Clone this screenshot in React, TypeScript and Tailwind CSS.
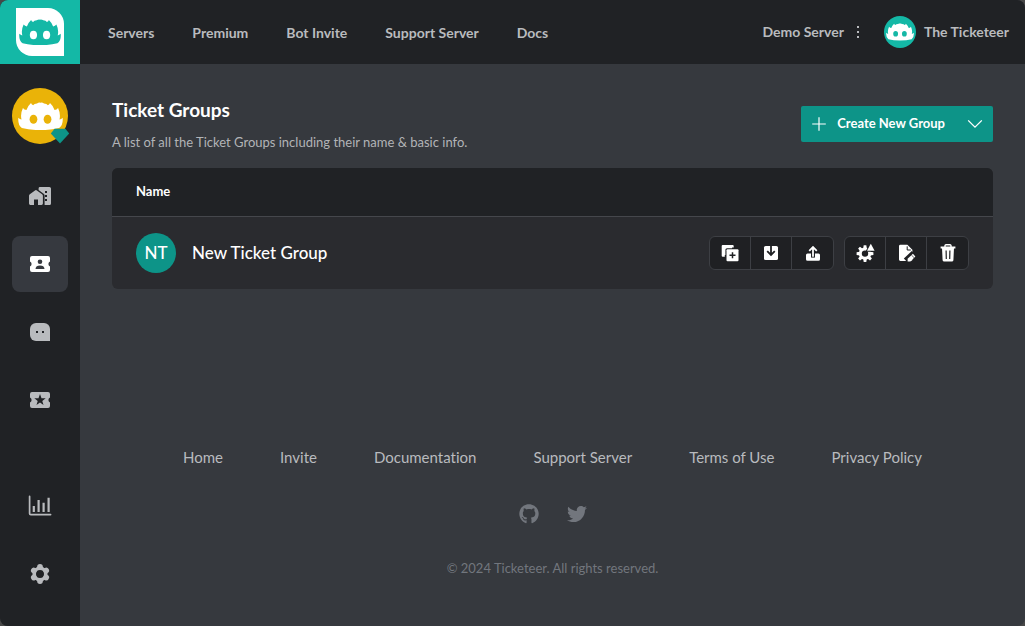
import type { ReactNode } from "react";
import { FaGithub, FaTwitter } from "react-icons/fa";

function Mascot({ className, eyes }: { className: string; eyes: string }) {
  return (
    <svg viewBox="32 46 128 82" className={className} aria-hidden="true">
      <path
        fill="currentColor"
        d="M33 91Q37 95 42 96Q38 80 46 63Q50 68 56 69Q60 57 69 49Q70 53 75 55Q78 50 86 50Q91 47 96 48Q101 47 106 50Q114 50 117 55Q122 53 123 49Q132 57 136 69Q142 68 146 63Q154 80 150 96Q155 95 159 91Q161 112 149 120Q126 126 96 126Q66 126 43 120Q31 112 33 91Z"
      />
      <ellipse cx="76" cy="95" rx="11" ry="13" fill={eyes} />
      <ellipse cx="116" cy="95" rx="11" ry="13" fill={eyes} />
    </svg>
  );
}

const ticketShape =
  "M4 4H20A2 2 0 0 1 22 6V9.6A2.6 2.6 0 0 0 22 14.4V18A2 2 0 0 1 20 20H4A2 2 0 0 1 2 18V14.4A2.6 2.6 0 0 0 2 9.6V6A2 2 0 0 1 4 4Z";

function HomeWork() {
  return (
    <svg viewBox="0 0 24 24" className="size-6" aria-hidden="true">
      <path d="M12 3H21.4A1.6 1.6 0 0 1 23 4.6V19.4A1.6 1.6 0 0 1 21.4 21H16.6V11.6A2.4 2.4 0 0 0 15.6 9.7L10.6 6.1V4.4A1.4 1.4 0 0 1 12 3Z" fill="currentColor" />
      <path d="M17 7h2v2h-2zM17 11h2v2h-2zM17 15h2v2h-2z" fill="#202225" />
      <path d="M1 11.8A2 2 0 0 1 1.8 10.2L7 6.4A1.6 1.6 0 0 1 8.9 6.4L14.1 10.2A2 2 0 0 1 14.9 11.8V19.6A1.4 1.4 0 0 1 13.5 21H10V15.5H6V21H2.4A1.4 1.4 0 0 1 1 19.6Z" fill="currentColor" />
    </svg>
  );
}

function TicketPerson() {
  return (
    <svg viewBox="0 0 24 24" className="size-6" aria-hidden="true">
      <path d={ticketShape} fill="currentColor" />
      <circle cx="12" cy="9.8" r="2.3" fill="#36393f" />
      <path d="M7.5 17Q7.8 13.6 12 13.6T16.5 17Z" fill="#36393f" />
    </svg>
  );
}

function TicketStar() {
  return (
    <svg viewBox="0 0 24 24" className="size-6" aria-hidden="true">
      <path d={ticketShape} fill="currentColor" />
      <path
        d="M12 6L13.5 10.2L17.7 10.3L14.3 12.9L15.5 17L12 14.6L8.5 17L9.7 12.9L6.3 10.3L10.5 10.2Z"
        fill="#202225"
      />
    </svg>
  );
}

function ChatBox() {
  return (
    <svg viewBox="0 0 24 24" className="size-6" aria-hidden="true">
      <path d="M8 3H16A6 6 0 0 1 22 9V21H8A6 6 0 0 1 2 15V9A6 6 0 0 1 8 3Z" fill="currentColor" />
      <path d="M8 11h2v2H8zM14 11h2v2h-2z" fill="#202225" />
    </svg>
  );
}

function BarChart() {
  return (
    <svg viewBox="0 0 24 24" className="size-6" fill="none" stroke="currentColor" aria-hidden="true">
      <path d="M1.6 2.4V19.4A1.2 1.2 0 0 0 2.8 20.6H22.6" strokeWidth="1.7" strokeLinecap="round" />
      <path d="M5.8 12V18M10.6 6V18M15.6 8.7V18M20.6 3.7V18" strokeWidth="2.2" />
    </svg>
  );
}

function Cog() {
  return (
    <svg viewBox="0 0 24 24" className="size-6" aria-hidden="true">
      <circle cx="12" cy="12" r="5.8" fill="none" stroke="currentColor" strokeWidth="3.6" />
      {[0, 60, 120, 180, 240, 300].map((a) => (
        <circle key={a} cx="12" cy="4.9" r="2.9" fill="currentColor" transform={`rotate(${a} 12 12)`} />
      ))}
    </svg>
  );
}

function Icon20({ children }: { children: ReactNode }) {
  return (
    <svg viewBox="0 0 20 20" className="size-5" fill="none" aria-hidden="true">
      {children}
    </svg>
  );
}

const dark = "#1f2023";

const transferActions = [
  {
    label: "Duplicate group",
    icon: (
      <Icon20>
        <path d="M2.7 2H12.7A1 1 0 0 1 13.7 3V4.4H4.8V13.7H2.7A1 1 0 0 1 1.7 12.7V3A1 1 0 0 1 2.7 2Z" fill="#fff" />
        <path d="M3.5 3.5H12V12H3.5Z" fill="#fff" />
        <rect x="5.4" y="5.2" width="13.8" height="13.8" rx="1.6" fill={dark} />
        <rect x="6.5" y="6.2" width="12" height="12" rx="1" fill="#fff" />
        <path d="M12.5 9.2V15.2M9.5 12.2H15.5" stroke={dark} strokeWidth="1.5" />
      </Icon20>
    ),
  },
  {
    label: "Import group",
    icon: (
      <Icon20>
        <rect x="3" y="3" width="14" height="14" rx="1.6" fill="#fff" />
        <path d="M10 3V11M6.2 8.2L10 12L13.8 8.2" stroke={dark} strokeWidth="1.8" />
      </Icon20>
    ),
  },
  {
    label: "Export group",
    icon: (
      <Icon20>
        <path d="M4.5 10.6H15.5A1.5 1.5 0 0 1 17 12.1V16.3A1.5 1.5 0 0 1 15.5 17.8H4.5A1.5 1.5 0 0 1 3 16.3V12.1A1.5 1.5 0 0 1 4.5 10.6Z" fill="#fff" />
        <path d="M10 9V14.6" stroke={dark} strokeWidth="4" />
        <path d="M10 4.4V13.8M6.2 7.8L10 4L13.8 7.8" stroke="#fff" strokeWidth="1.8" />
      </Icon20>
    ),
  },
];

const manageActions = [
  {
    label: "Group settings",
    icon: (
      <Icon20>
        <circle cx="10" cy="10.6" r="4.7" stroke="#fff" strokeWidth="3" />
        {[0, 45, 90, 135, 180, 225, 270, 315].map((a) => (
          <path key={a} d="M8.7 2.2H11.3L11.8 5.4H8.2Z" fill="#fff" transform={`rotate(${a} 10 10.6)`} />
        ))}
        <path d="M15.6 -1L21 8.8H10.4Z" fill={dark} />
        <path d="M15.8 0.8L19.6 7.8H12Z" fill="#fff" />
      </Icon20>
    ),
  },
  {
    label: "Edit group",
    icon: (
      <Icon20>
        <path d="M4.4 1.8H11.4L16.4 6.8V16.6A1.4 1.4 0 0 1 15 18H4.4A1.4 1.4 0 0 1 3 16.6V3.2A1.4 1.4 0 0 1 4.4 1.8Z" fill="#fff" />
        <path d="M11.2 3.4V7H14.8" stroke={dark} strokeWidth="1" />
        <path d="M10 17.8L18 10.4" stroke={dark} strokeWidth="6.4" />
        <path d="M11.6 18.6V15.8L16.9 10.8L19.4 13.4L14.4 18.6Z" fill="#fff" />
        <path d="M15.4 12L18 14.6" stroke={dark} strokeWidth=".7" />
      </Icon20>
    ),
  },
  {
    label: "Delete group",
    icon: (
      <Icon20>
        <path d="M7 4V2.6A1 1 0 0 1 8 1.7H12A1 1 0 0 1 13 2.6V4" stroke="#fff" strokeWidth="1.4" />
        <path d="M2.6 3.6H17.4V5.4H2.6Z" fill="#fff" />
        <path d="M4 5H16L15.4 17.2A1.6 1.6 0 0 1 13.8 18.6H6.2A1.6 1.6 0 0 1 4.6 17.2Z" fill="#fff" />
        <path d="M8.1 7.6L8.3 16M11.9 7.6L11.7 16" stroke={dark} strokeWidth="1.2" />
      </Icon20>
    ),
  },
];

function ActionGroup({ actions }: { actions: { label: string; icon: ReactNode }[] }) {
  return (
    <div className="flex divide-x divide-[#3d3f44] overflow-hidden rounded-md border border-[#3d3f44] bg-[#1f2023]">
      {actions.map((a) => (
        <button key={a.label} type="button" aria-label={a.label} className="flex h-8 w-[41px] items-center justify-center">
          {a.icon}
        </button>
      ))}
    </div>
  );
}

function SideLink({ label, active = false, children }: { label: string; active?: boolean; children: ReactNode }) {
  return (
    <a
      href="#"
      aria-label={label}
      className={
        active
          ? "flex size-14 items-center justify-center rounded-lg bg-[#36393f] text-white"
          : "flex size-14 items-center justify-center rounded-lg text-[#b9bbbe]"
      }
    >
      {children}
    </a>
  );
}

const navLinks = ["Servers", "Premium", "Bot Invite", "Support Server", "Docs"];
const footerLinks = ["Home", "Invite", "Documentation", "Support Server", "Terms of Use", "Privacy Policy"];

export default function App() {
  return (
    <div className="min-h-screen bg-[#484848] font-['Lato',sans-serif] [font-variant-ligatures:none]">
      <div className="flex min-h-screen overflow-hidden rounded-lg bg-[#36393e]">
        <aside className="flex w-20 shrink-0 flex-col bg-[#202225]">
          <a href="#" aria-label="Ticketeer" className="flex h-16 items-center justify-center bg-[#14b8a6]">
            <span className="flex size-12 items-center justify-center rounded-tr-2xl rounded-bl-2xl bg-white">
              <Mascot className="w-[42px] text-[#14b8a6]" eyes="#fff" />
            </span>
          </a>
          <nav className="flex grow flex-col items-center gap-3 py-6">
            <a href="#" aria-label="Demo Server" className="relative mb-3 flex size-14 items-center justify-center rounded-full bg-[#eab308]">
              <Mascot className="w-[45px] text-white" eyes="#eab308" />
              <svg viewBox="0 0 20 16" className="absolute -right-0.5 bottom-0 h-4 w-5" aria-hidden="true">
                <path d="M4.6 0.8H15.4L19.2 5.6L10 15.6L0.8 5.6Z" fill="#0d9488" />
              </svg>
            </a>
            <SideLink label="Overview"><HomeWork /></SideLink>
            <SideLink label="Ticket Groups" active><TicketPerson /></SideLink>
            <SideLink label="Messages"><ChatBox /></SideLink>
            <SideLink label="Premium"><TicketStar /></SideLink>
            <div className="mt-auto flex flex-col gap-3">
              <SideLink label="Statistics"><BarChart /></SideLink>
              <SideLink label="Settings"><Cog /></SideLink>
            </div>
          </nav>
        </aside>

        <div className="flex min-w-0 grow flex-col">
          <header className="flex h-16 items-center justify-between bg-[#202225] pr-4 pl-7 text-sm font-bold whitespace-nowrap text-[#b9bbbe]">
            <nav className="flex gap-[38px] pt-0.5">
              {navLinks.map((l) => (
                <a key={l} href="#">{l}</a>
              ))}
            </nav>
            <div className="flex items-center">
              <span>Demo Server</span>
              <button type="button" aria-label="Server menu" className="mr-3 flex w-7 justify-center">
                <svg viewBox="0 0 4 14" className="h-3.5 w-1" fill="currentColor" aria-hidden="true">
                  <path d="M1 1h2v2H1zM1 6h2v2H1zM1 11h2v2H1z" />
                </svg>
              </button>
              <a href="#" className="flex items-center gap-2">
                <span className="flex size-8 items-center justify-center rounded-full bg-[#14b8a6]">
                  <Mascot className="w-7 text-white" eyes="#14b8a6" />
                </span>
                The Ticketeer
              </a>
            </div>
          </header>

          <main className="px-8 pt-8">
            <div className="flex items-start justify-between pb-4">
              <div>
                <h1 className="text-[19px] leading-7 font-bold text-white">Ticket Groups</h1>
                <p className="mt-2 text-[13px] leading-5 text-[#b2b4b7]">
                  A list of all the Ticket Groups including their name &amp; basic info.
                </p>
              </div>
              <div className="mt-2.5 flex h-9 overflow-hidden rounded-xs bg-[#0d9488] text-white">
                <button type="button" className="flex items-center gap-2 pl-2 text-[13px] font-bold">
                  <svg viewBox="0 0 20 20" className="size-5" fill="none" stroke="currentColor" strokeWidth="1.2" aria-hidden="true">
                    <path d="M10 3.2V16.8M3.2 10H16.8" />
                  </svg>
                  Create New Group
                </button>
                <button type="button" aria-label="More create options" className="flex w-12 items-center justify-center pl-3">
                  <svg viewBox="0 0 20 20" className="size-5" fill="none" stroke="currentColor" strokeWidth="1.3" aria-hidden="true">
                    <path d="M3.2 6.4L10 13.2L16.8 6.4" />
                  </svg>
                </button>
              </div>
            </div>

            <div className="overflow-hidden rounded-md bg-[#2a2b2f]">
              <table className="w-full text-left text-white">
                <thead className="bg-[#202225]">
                  <tr className="h-12">
                    <th scope="col" colSpan={2} className="px-6 text-[13px] font-bold">Name</th>
                  </tr>
                </thead>
                <tbody>
                  <tr className="border-t border-[#45474c]">
                    <td className="py-4 pl-6">
                      <div className="flex items-center gap-4 text-[17px] font-medium">
                        <span className="flex size-10 items-center justify-center rounded-full bg-[#0d9488]">NT</span>
                        New Ticket Group
                      </div>
                    </td>
                    <td className="py-4 pr-6">
                      <div className="flex justify-end gap-2.5">
                        <ActionGroup actions={transferActions} />
                        <ActionGroup actions={manageActions} />
                      </div>
                    </td>
                  </tr>
                </tbody>
              </table>
            </div>
          </main>

          <footer className="mt-auto flex flex-col items-center pb-[46px]">
            <nav className="flex flex-wrap justify-center gap-x-[57px] gap-y-4 text-[15px] leading-6 text-[#b9bbbe]">
              {footerLinks.map((l) => (
                <a key={l} href="#">{l}</a>
              ))}
            </nav>
            <div className="mt-[35px] flex gap-7 text-[#72767d]">
              <a href="#" aria-label="GitHub"><FaGithub className="size-5" /></a>
              <a href="#" aria-label="Twitter"><FaTwitter className="size-5" /></a>
            </div>
            <p className="mt-8 text-[13px] leading-6 text-[#72767d]">© 2024 Ticketeer. All rights reserved.</p>
          </footer>
        </div>
      </div>
    </div>
  );
}
